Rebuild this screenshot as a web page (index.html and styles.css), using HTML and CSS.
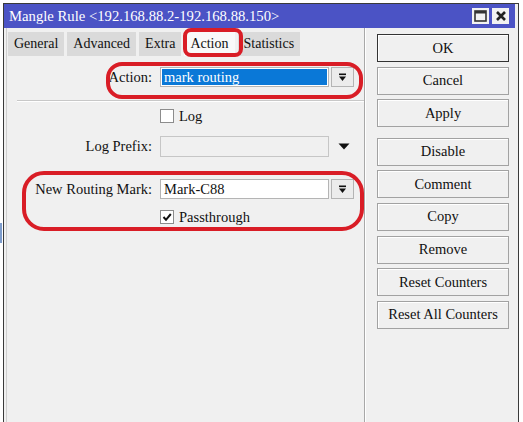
FILE: index.html
```html
<!DOCTYPE html>
<html lang="en">
<head>
    <meta charset="UTF-8">
    <title>Mangle Rule</title>
    <link rel="stylesheet" href="styles.css">
</head>
<body>

<div class="sliver"></div>

<div class="window">
    <div class="titlebar">
        <span class="title">Mangle Rule &lt;192.168.88.2-192.168.88.150&gt;</span>
        <div class="title-buttons">
            <span class="tbtn">
                <svg width="13" height="12" viewBox="0 0 13 12"><rect x="1" y="1" width="11" height="10" fill="none" stroke="#333" stroke-width="1.6"/><rect x="1" y="1" width="11" height="2.5" fill="#333"/></svg>
            </span>
            <span class="tbtn">
                <svg width="12" height="12" viewBox="0 0 12 12"><path d="M2 2 L10 10 M10 2 L2 10" stroke="#222" stroke-width="2.6"/></svg>
            </span>
        </div>
    </div>

    <div class="content">
        <div class="main">
            <ul class="tabs">
                <li>General</li>
                <li>Advanced</li>
                <li>Extra</li>
                <li class="active">Action</li>
                <li>Statistics</li>
            </ul>

            <div class="form">
                <div class="row row-action">
                    <label>Action:</label>
                    <div class="field"><span class="selected">mark routing</span></div>
                    <span class="drop">
                        <svg width="9" height="9" viewBox="0 0 9 9"><rect x="1" y="0.5" width="7" height="1.6" fill="#111"/><path d="M1 3.5 H8 L4.5 8 Z" fill="#111"/></svg>
                    </span>
                </div>

                <div class="separator"></div>

                <div class="row row-check">
                    <span></span>
                    <div class="check"><span class="box"></span>Log</div>
                </div>

                <div class="row row-prefix">
                    <label>Log Prefix:</label>
                    <div class="field disabled"></div>
                    <span class="arrow">
                        <svg width="12" height="7" viewBox="0 0 12 7"><path d="M0.5 0.5 H11.5 L6 6.5 Z" fill="#111"/></svg>
                    </span>
                </div>

                <div class="row row-mark">
                    <label>New Routing Mark:</label>
                    <div class="field">Mark-C88</div>
                    <span class="drop">
                        <svg width="9" height="9" viewBox="0 0 9 9"><rect x="1" y="0.5" width="7" height="1.6" fill="#111"/><path d="M1 3.5 H8 L4.5 8 Z" fill="#111"/></svg>
                    </span>
                </div>

                <div class="row row-pass">
                    <span></span>
                    <div class="check">
                        <span class="box">
                            <svg width="12" height="12" viewBox="0 0 12 12"><path d="M2.5 6 L5 8.8 L9.8 3" fill="none" stroke="#111" stroke-width="2"/></svg>
                        </span>Passthrough
                    </div>
                </div>
            </div>
        </div>

        <div class="side">
            <button class="btn default">OK</button>
            <button class="btn">Cancel</button>
            <button class="btn">Apply</button>
            <button class="btn spaced">Disable</button>
            <button class="btn">Comment</button>
            <button class="btn">Copy</button>
            <button class="btn">Remove</button>
            <button class="btn">Reset Counters</button>
            <button class="btn">Reset All Counters</button>
        </div>
    </div>
</div>

<!-- red annotations drawn over the dialog -->
<div class="mark mark-tab"></div>
<div class="mark mark-action"></div>
<div class="mark mark-routing"></div>

</body>
</html>
```

FILE: styles.css
```css
body {
    margin: 0;
    background: #fff;
    font-family: "Liberation Serif", "Times New Roman", serif;
    font-size: 14px;
    color: #111;
    height: 422px;
    overflow: hidden;
    position: relative;
}

.sliver {
    position: absolute;
    left: 0;
    top: 223px;
    width: 2px;
    height: 20px;
    background: #7d9ccc;
}

.window {
    margin: 3px 0 0 3px;
    width: 516px;
    height: 430px;
    box-sizing: border-box;
    border: 1px solid #3a3a3a;
    border-bottom: none;
    background: #f0f0f0;
}

.titlebar {
    height: 24px;
    background: #4b53c5;
    display: flex;
    align-items: center;
    padding: 0 6px 0 5px;
    color: #fff;
    margin-right: 3px;
}

.title {
    font-size: 14.7px;
}

.title-buttons {
    margin-left: auto;
    display: flex;
    gap: 3px;
}

.tbtn {
    width: 17px;
    height: 16px;
    background: #f2f2f2;
    display: flex;
    align-items: center;
    justify-content: center;
}

.content {
    display: flex;
}

.main {
    width: 357px;
    height: 400px;
    margin-left: 2px;
    border-left: 1px solid #cfcfcf;
    border-right: 1px solid #a8a8a8;
}

.tabs {
    list-style: none;
    margin: 4px 0 0 1px;
    padding: 0;
    display: flex;
    gap: 3px;
}

.tabs li {
    height: 24px;
    line-height: 24px;
    padding: 0 6px;
    background: #dadada;
}

.tabs li.active {
    background: #f9f9f9;
}

.form {
    padding-top: 11px;
    font-size: 14.5px;
}

.row {
    display: grid;
    grid-template-columns: 153px 169px 25px;
    align-items: center;
}

.row label {
    text-align: right;
    padding-right: 8px;
}

.field {
    height: 20px;
    box-sizing: border-box;
    border: 1px solid #b4b4b4;
    background: #fff;
    padding: 0 3px;
    line-height: 18px;
}

.field .selected {
    display: block;
    height: 16px;
    margin: 1px -2px;
    padding: 0 2px;
    line-height: 16px;
    background: #0a78d7;
    color: #fff;
}

.field.disabled {
    height: 21px;
    background: #f0f0f0;
    border-color: #c6c6c6;
}

.drop {
    justify-self: end;
    width: 23px;
    height: 20px;
    box-sizing: border-box;
    border: 1px solid #b4b4b4;
    background: #ececec;
    display: flex;
    align-items: center;
    justify-content: center;
}

.arrow {
    justify-self: end;
    width: 20px;
    display: flex;
    justify-content: center;
}

.separator {
    margin: 13px 0 0 10px;
    border-top: 1px solid #c8c8c8;
    border-bottom: 1px solid #fff;
}

.row-check {
    margin-top: 7px;
}

.row-prefix {
    margin-top: 13px;
}

.row-mark {
    margin-top: 22px;
}

.row-pass {
    margin-top: 11px;
}

.check {
    display: flex;
    align-items: center;
    height: 14px;
    white-space: nowrap;
    font-family: "Liberation Serif", "Times New Roman", serif;
}

.check .box {
    width: 14px;
    height: 14px;
    box-sizing: border-box;
    border: 1px solid #8c8c8c;
    background: #fff;
    margin-right: 5px;
    display: flex;
    align-items: center;
    justify-content: center;
}

.side {
    flex: 1;
    padding: 6px 0 0 11px;
    border-left: 1px solid #fff;
    display: flex;
    flex-direction: column;
    gap: 4.6px;
}

.btn {
    width: 132px;
    height: 28px;
    font-family: "Liberation Serif", "Times New Roman", serif;
    font-size: 14.5px;
    color: #111;
    background: #f0f0f0;
    border: 1px solid #a2a2a2;
    box-shadow: inset 1px 1px 0 #fff;
    padding: 0;
}

.btn.default {
    border-color: #333;
}

.btn.spaced {
    margin-top: 6px;
}

.mark {
    position: absolute;
    border: 4px solid #d91d26;
    box-sizing: border-box;
}

.mark-tab {
    left: 183px;
    top: 28px;
    width: 60px;
    height: 29px;
    border-radius: 8px;
}

.mark-action {
    left: 106px;
    top: 62px;
    width: 257px;
    height: 37px;
    border-radius: 16px;
}

.mark-routing {
    left: 22px;
    top: 171px;
    width: 342px;
    height: 60px;
    border-radius: 22px;
}
```
